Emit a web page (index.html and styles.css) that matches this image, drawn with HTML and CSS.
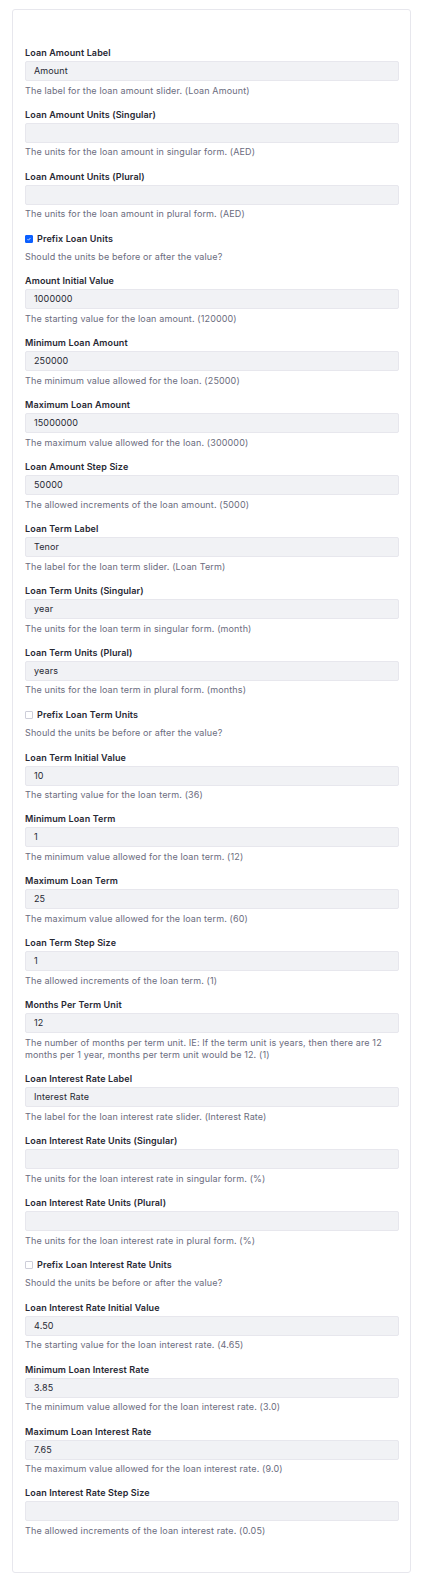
FILE: index.html
```html
<!DOCTYPE html>
<html>
<head>
<meta charset="utf-8">
<link rel="stylesheet" href="styles.css">
</head>
<body>
<div class="card">
  <div class="field"><label class="label">Loan Amount Label</label><div class="input">Amount</div><div class="help">The label for the loan amount slider. (Loan Amount)</div></div>
  <div class="field"><label class="label">Loan Amount Units (Singular)</label><div class="input"></div><div class="help">The units for the loan amount in singular form. (AED)</div></div>
  <div class="field"><label class="label">Loan Amount Units (Plural)</label><div class="input"></div><div class="help">The units for the loan amount in plural form. (AED)</div></div>
  <div class="field check-field"><label class="check-label"><span class="box checked"><svg viewBox="0 0 8 8" width="8" height="8"><path d="M2 4.3 L3.3 5.6 L6 2.6" fill="none" stroke="#fff" stroke-width="1"/></svg></span>Prefix Loan Units</label><div class="help">Should the units be before or after the value?</div></div>
  <div class="field"><label class="label">Amount Initial Value</label><div class="input">1000000</div><div class="help">The starting value for the loan amount. (120000)</div></div>
  <div class="field"><label class="label">Minimum Loan Amount</label><div class="input">250000</div><div class="help">The minimum value allowed for the loan. (25000)</div></div>
  <div class="field"><label class="label">Maximum Loan Amount</label><div class="input">15000000</div><div class="help">The maximum value allowed for the loan. (300000)</div></div>
  <div class="field"><label class="label">Loan Amount Step Size</label><div class="input">50000</div><div class="help">The allowed increments of the loan amount. (5000)</div></div>
  <div class="field"><label class="label">Loan Term Label</label><div class="input">Tenor</div><div class="help">The label for the loan term slider. (Loan Term)</div></div>
  <div class="field"><label class="label">Loan Term Units (Singular)</label><div class="input">year</div><div class="help">The units for the loan term in singular form. (month)</div></div>
  <div class="field"><label class="label">Loan Term Units (Plural)</label><div class="input">years</div><div class="help">The units for the loan term in plural form. (months)</div></div>
  <div class="field check-field"><label class="check-label"><span class="box"></span>Prefix Loan Term Units</label><div class="help">Should the units be before or after the value?</div></div>
  <div class="field"><label class="label">Loan Term Initial Value</label><div class="input">10</div><div class="help">The starting value for the loan term. (36)</div></div>
  <div class="field"><label class="label">Minimum Loan Term</label><div class="input">1</div><div class="help">The minimum value allowed for the loan term. (12)</div></div>
  <div class="field"><label class="label">Maximum Loan Term</label><div class="input">25</div><div class="help">The maximum value allowed for the loan term. (60)</div></div>
  <div class="field"><label class="label">Loan Term Step Size</label><div class="input">1</div><div class="help">The allowed increments of the loan term. (1)</div></div>
  <div class="field"><label class="label">Months Per Term Unit</label><div class="input">12</div><div class="help">The number of months per term unit. IE: If the term unit is years, then there are 12 months per 1 year, months per term unit would be 12. (1)</div></div>
  <div class="field"><label class="label">Loan Interest Rate Label</label><div class="input">Interest Rate</div><div class="help">The label for the loan interest rate slider. (Interest Rate)</div></div>
  <div class="field"><label class="label">Loan Interest Rate Units (Singular)</label><div class="input"></div><div class="help">The units for the loan interest rate in singular form. (%)</div></div>
  <div class="field"><label class="label">Loan Interest Rate Units (Plural)</label><div class="input"></div><div class="help">The units for the loan interest rate in plural form. (%)</div></div>
  <div class="field check-field"><label class="check-label"><span class="box"></span>Prefix Loan Interest Rate Units</label><div class="help">Should the units be before or after the value?</div></div>
  <div class="field"><label class="label">Loan Interest Rate Initial Value</label><div class="input">4.50</div><div class="help">The starting value for the loan interest rate. (4.65)</div></div>
  <div class="field"><label class="label">Minimum Loan Interest Rate</label><div class="input">3.85</div><div class="help">The minimum value allowed for the loan interest rate. (3.0)</div></div>
  <div class="field"><label class="label">Maximum Loan Interest Rate</label><div class="input">7.65</div><div class="help">The maximum value allowed for the loan interest rate. (9.0)</div></div>
  <div class="field"><label class="label">Loan Interest Rate Step Size</label><div class="input"></div><div class="help">The allowed increments of the loan interest rate. (0.05)</div></div>
</div>
</body>
</html>
```
FILE: styles.css
```css
html, body {
  margin: 0;
  padding: 0;
  background: #fff;
}
body {
  padding: 9px 12px 12px 12px;
  font-family: Inter, "Liberation Sans", sans-serif;
  color: #272833;
}
.card {
  border: 1px solid #e7e7ed;
  border-radius: 3px;
  padding: 37px 11px 35px 12px;
  display: flex;
  flex-direction: column;
  gap: 12px;
}
.field {
  display: flex;
  flex-direction: column;
}
.label {
  font-size: 9px;
  line-height: 12px;
  font-weight: 600;
  letter-spacing: 0.12px;
  margin-bottom: 2px;
}
.input {
  height: 18px;
  background: #f1f2f5;
  border: 1px solid #e7e7ed;
  border-radius: 2px;
  font-size: 9px;
  line-height: 18px;
  letter-spacing: 0.12px;
  padding: 0 8px;
}
.help {
  margin-top: 3.6px;
  font-size: 9px;
  line-height: 12.3px;
  letter-spacing: 0.13px;
  color: #6b6c7e;
}
.check-label {
  display: flex;
  align-items: center;
  gap: 4px;
  font-size: 9px;
  line-height: 12px;
  font-weight: 600;
  letter-spacing: 0.12px;
}
.check-field .help {
  margin-top: 6.5px;
}
.box {
  width: 6px;
  height: 6px;
  border: 1px solid #cdced9;
  border-radius: 1px;
  background: #fff;
  display: flex;
  align-items: center;
  justify-content: center;
}
.box.checked {
  background: #0b5fff;
  border-color: #0b5fff;
}
.box svg {
  width: 6px;
  height: 6px;
}
```
